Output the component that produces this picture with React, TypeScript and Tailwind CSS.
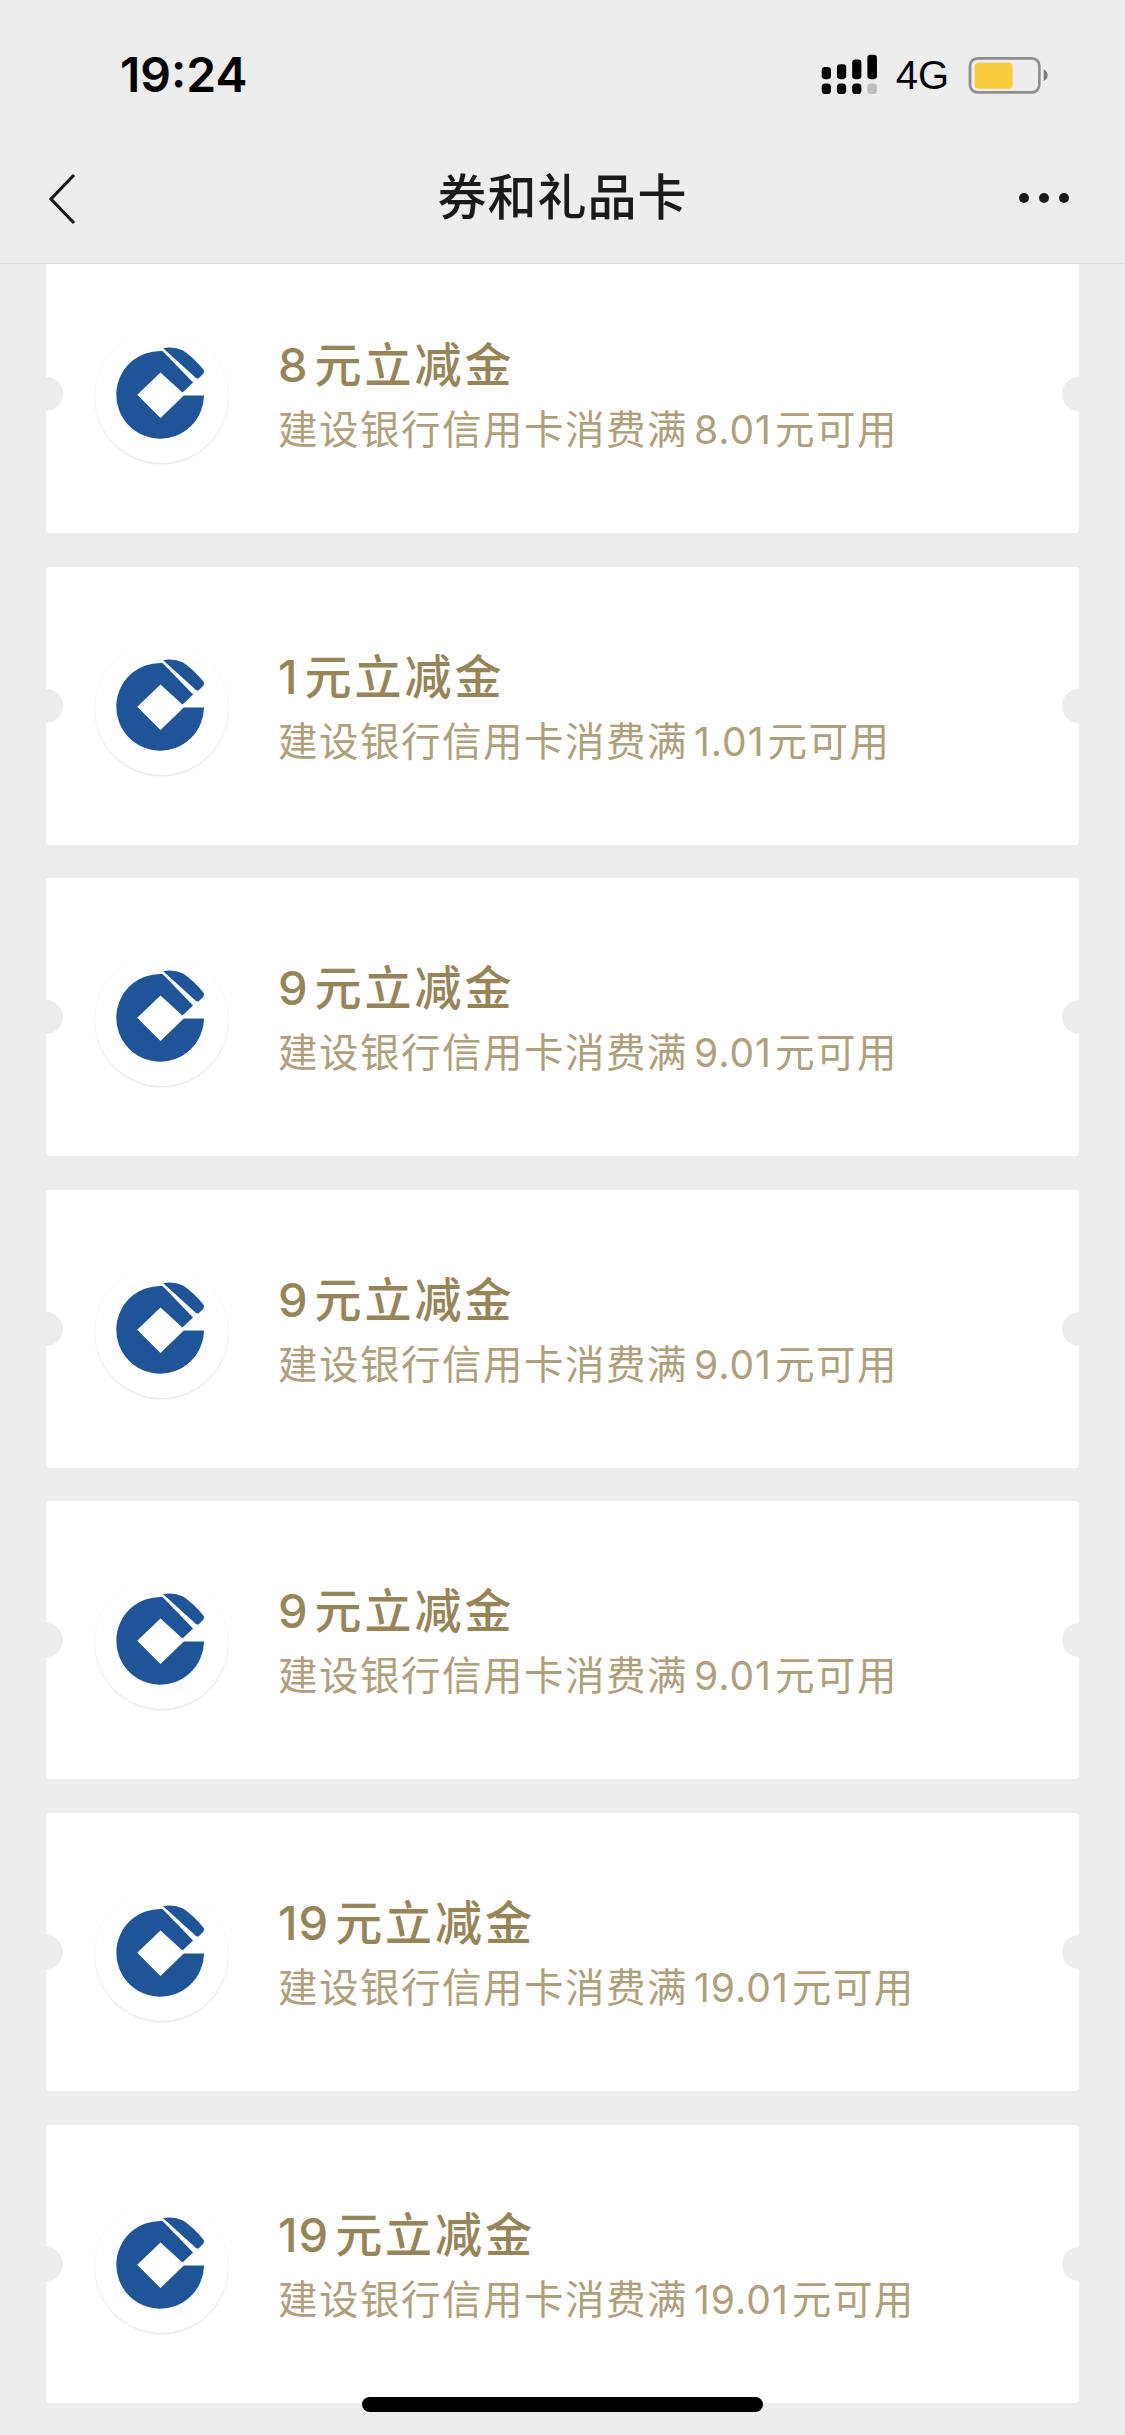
const coupons = [
  { title: "8", sub: "8.01" },
  { title: "1", sub: "1.01" },
  { title: "9", sub: "9.01" },
  { title: "9", sub: "9.01" },
  { title: "9", sub: "9.01" },
  { title: "19", sub: "19.01" },
  { title: "19", sub: "19.01" },
];

function Logo() {
  return (
    <div className="relative h-[133px] w-[133px] shrink-0 rounded-full bg-white shadow-[0_1px_2px_rgba(0,0,0,0.12)]">
      <svg viewBox="285 90 400 400" className="h-[133px] w-[133px]">
        <path
          d="M488 153A132 132 0 1 0 613 287L552 287L482 355L412 285L482 218L548 278L580 248Z"
          fill="#1f5496"
        />
        <path
          d="M490 145Q520 138 550 152Q580 172 612 210Q615 216 610 222L597 235Q592 238 587 233Z"
          fill="#1f5496"
        />
      </svg>
    </div>
  );
}

function Card({ title, sub, first }: { title: string; sub: string; first: boolean }) {
  return (
    <div
      className={`relative flex h-[278px] shrink-0 items-start rounded-[3px] bg-white pl-[49px] ${first ? "-mt-[9px]" : ""}`}
    >
      <div className="absolute -left-[17px] top-[122px] h-[34px] w-[34px] rounded-full bg-[#ededed]" />
      <div className="absolute -right-[17px] top-[122px] h-[34px] w-[34px] rounded-full bg-[#ededed]" />
      <div className="mt-[75px]">
        <Logo />
      </div>
      <div className="ml-[50px] mt-[80px] flex flex-col">
        <div className="h-[60px] text-[47px] font-medium leading-[60px] tracking-[3px] text-[#97855a]">
          <span className="mr-[6px] text-[47px] tracking-[1px] [font-family:Inter,sans-serif]">{title}</span>元立减金
        </div>
        <div className="mt-[10px] h-[50px] text-[39.5px] leading-[50px] tracking-[1.5px] text-[#ae9f7d]">
          建设银行信用卡消费满<span className="ml-[6px] mr-[3px] text-[39px] tracking-[1px] [font-family:Inter,sans-serif]">{sub}</span>元可用
        </div>
      </div>
    </div>
  );
}

export default function App() {
  return (
    <div className="relative h-[2435px] w-[1125px] overflow-hidden bg-[#ededed] [font-family:'Liberation_Sans','Noto_Sans_CJK_SC',sans-serif]">
      <header className="relative z-10 flex h-[264px] flex-col border-b border-[#dcdcdc] bg-[#ededed]">
        <div className="flex h-[132px] items-center justify-between pl-[120px] pr-[76px] pt-[18px]">
          <span className="text-[48px] leading-none text-black [font-family:Inter,sans-serif] [font-weight:600]">
            19:24
          </span>
          <div className="flex items-center">
            <svg viewBox="125 68 178 130" className="h-[43px] w-[59px]">
              <rect x="130" y="110" width="28" height="37" rx="10" fill="#000" />
              <rect x="176" y="102" width="28" height="45" rx="10" fill="#000" />
              <rect x="222" y="88" width="28" height="59" rx="10" fill="#000" />
              <rect x="268" y="73" width="29" height="74" rx="10" fill="#000" />
              <rect x="130" y="160" width="28" height="32" rx="11" fill="#000" />
              <rect x="176" y="160" width="28" height="32" rx="11" fill="#000" />
              <rect x="222" y="160" width="28" height="32" rx="11" fill="#000" />
              <rect x="268" y="160" width="29" height="32" rx="11" fill="#bdbdbd" />
            </svg>
            <span className="ml-[17px] text-[40px] leading-none text-black">4G</span>
            <svg viewBox="565 72 246 120" className="ml-[18px] h-[40px] w-[82px]">
              <rect x="574" y="82" width="208" height="102" rx="22" fill="none" stroke="#8e8e8e" strokeWidth="8" />
              <rect x="588" y="95" width="114" height="78" rx="12" fill="#f8cd40" />
              <path d="M795 115Q807 122 807 133Q807 144 795 150Z" fill="#7a7a7a" />
            </svg>
          </div>
        </div>
        <div className="relative flex h-[132px] items-center justify-center pt-[2px]">
          <svg viewBox="0 0 30 52" className="absolute left-[47px] top-[41px] h-[52px] w-[30px]">
            <path d="M27 2L4 26L27 50" fill="none" stroke="#1a1a1a" strokeWidth="3.2" />
          </svg>
          <span className="text-[49px] font-medium leading-none tracking-[1px] text-[#1a1a1a]">券和礼品卡</span>
          <div className="absolute right-[56px] top-[61px] flex gap-[10px]">
            <span className="h-[10px] w-[10px] rounded-full bg-[#1a1a1a]" />
            <span className="h-[10px] w-[10px] rounded-full bg-[#1a1a1a]" />
            <span className="h-[10px] w-[10px] rounded-full bg-[#1a1a1a]" />
          </div>
        </div>
      </header>
      <main className="flex flex-col gap-[33.6px] px-[46px]">
        {coupons.map((c, i) => (
          <Card key={i} title={c.title} sub={c.sub} first={i === 0} />
        ))}
      </main>
      <div className="absolute left-[362px] top-[2397px] h-[15px] w-[401px] rounded-[8px] bg-black" />
    </div>
  );
}
